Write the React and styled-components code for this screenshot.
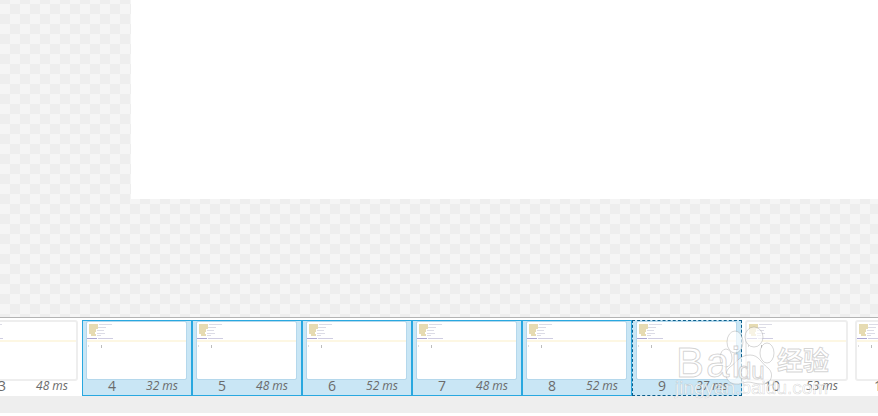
import React from "react";
import styled, { createGlobalStyle } from "styled-components";

const Global = createGlobalStyle`
  html, body {
    margin: 0;
    padding: 0;
    background: #fff;
    overflow: hidden;
  }
`;

const Page = styled.div`
  position: relative;
  width: 878px;
  height: 416px;
  overflow: hidden;
  display: flex;
  flex-direction: column;
  font-family: "Open Sans", "Liberation Sans", sans-serif;
`;

const Viewer = styled.div`
  height: 317px;
  padding-left: 131px;
  box-sizing: border-box;
  background: repeating-conic-gradient(#eeeeee 0 25%, #f5f5f5 0 50%) 0 4px / 20px 20px;
`;

const Canvas = styled.div`
  height: 199px;
  background: #fff;
`;

const Filmstrip = styled.div`
  display: flex;
  height: 79px;
  box-sizing: border-box;
  padding-top: 2px;
  margin-left: -28px;
  border-top: 1px solid #b4b4b4;
  background: #fff;
`;

const Frame = styled.div`
  flex: 0 0 110px;
  height: 76px;
  box-sizing: border-box;
  padding: 1px 4px 2px 4px;
  display: flex;
  flex-direction: column;
  background: ${(p) => (p.$selected ? "#c9e6f5" : "#fff")};
  border: 1px ${(p) => (p.$focused ? "dashed" : "solid")}
    ${(p) => (p.$focused ? "#0b5f8c" : p.$selected ? "#29a8e0" : "transparent")};
`;

const Thumb = styled.svg`
  display: block;
  width: 99px;
  height: 57px;
  flex: none;
  background: #fff;
  outline: ${(p) => (p.$selected ? "1px solid #b5d8ec" : "2px solid #eeeeee")};
  border-radius: 1px;
`;

const Meta = styled.div`
  flex: 1;
  min-height: 0;
  display: flex;
  align-items: center;
  line-height: 14px;
  color: #6b6b6b;
`;

const Index = styled.span`
  width: 50px;
  text-align: center;
  font-size: 14px;
`;

const Duration = styled.span`
  margin-left: auto;
  margin-right: 9px;
  font-size: 12px;
  font-style: italic;
`;

const Footer = styled.div`
  height: 17px;
  background: #eeeeee;
`;

const Watermark = styled.div`
  position: absolute;
  left: 674px;
  top: 326px;
  width: 170px;
  height: 80px;
  pointer-events: none;
`;

const Paw = styled.svg`
  position: absolute;
  left: 40px;
  top: 0;
  width: 70px;
  height: 64px;
`;

const Brand = styled.span`
  position: absolute;
  left: ${(p) => p.$left}px;
  top: ${(p) => p.$top}px;
  font-family: "Liberation Sans", sans-serif;
  font-size: ${(p) => p.$size}px;
  letter-spacing: ${(p) => p.$spacing || 0}px;
  line-height: 1;
  white-space: nowrap;
  color: rgba(255, 255, 255, 0.72);
  -webkit-text-stroke: 1px rgba(130, 130, 130, 0.34);
`;

const BrandCjk = styled(Brand)`
  font-family: "Noto Sans CJK SC", sans-serif;
  font-weight: 700;
`;

const Domain = styled(Brand)`
  color: rgba(255, 255, 255, 0.75);
  -webkit-text-stroke: 0.6px rgba(130, 130, 130, 0.3);
`;

const frames = [
  { n: 3, ms: 48 },
  { n: 4, ms: 32, selected: true },
  { n: 5, ms: 48, selected: true },
  { n: 6, ms: 52, selected: true },
  { n: 7, ms: 48, selected: true },
  { n: 8, ms: 52, selected: true },
  { n: 9, ms: 37, selected: true, focused: true },
  { n: 10, ms: 53 },
  { n: 11, ms: 48 },
];

// the little code page shown in every thumbnail
const ThumbArt = ({ selected }) => (
  <Thumb $selected={selected} viewBox="0 0 99 57">
    <g fill="#e6dbb2">
      <rect x="2" y="2" width="9" height="3" />
      <rect x="2" y="5" width="9" height="2" />
      <rect x="2" y="7" width="7" height="3" />
      <rect x="2" y="10" width="6" height="2" />
      <rect x="4" y="12" width="5" height="2" />
    </g>
    <g fill="#dcdce6">
      <rect x="12" y="2" width="13" height="1" />
      <rect x="11" y="5" width="8" height="1" />
      <rect x="10" y="8" width="7" height="1" />
      <rect x="10" y="11" width="8" height="1" />
      <rect x="10" y="13" width="4" height="1" />
    </g>
    <rect x="0" y="16" width="10" height="1" fill="#aaa5d4" />
    <rect x="11" y="16" width="15" height="1" fill="#cfcde2" />
    <rect x="0" y="18" width="99" height="2" fill="#fdf7e3" />
    <rect x="1" y="23" width="1" height="2" fill="#dddddd" />
    <rect x="14" y="23" width="1" height="3" fill="#bdbdbd" />
  </Thumb>
);

export default function App() {
  return (
    <Page>
      <Global />
      <Viewer>
        <Canvas />
      </Viewer>
      <Filmstrip>
        {frames.map((f) => (
          <Frame key={f.n} $selected={f.selected} $focused={f.focused}>
            <ThumbArt selected={f.selected} />
            <Meta>
              <Index>{f.n}</Index>
              <Duration>{f.ms} ms</Duration>
            </Meta>
          </Frame>
        ))}
      </Filmstrip>
      <Footer />
      <Watermark>
        <Paw viewBox="0 0 70 64">
          <g fill="rgba(255,255,255,0.66)" stroke="rgba(130,130,130,0.32)" strokeWidth="1">
            <ellipse cx="21" cy="16" rx="8" ry="11" />
            <ellipse cx="40" cy="11" rx="9" ry="10" />
            <ellipse cx="53" cy="27" rx="7" ry="10" />
            <ellipse cx="12" cy="32" rx="6" ry="9" />
            <path d="M36 29c9 0 11 8 18 13 7 6 3 17-7 16-6 0-9-2-13-2s-8 3-13 2c-9-1-12-11-5-17 7-5 10-12 20-12z" />
          </g>
        </Paw>
        <Brand $left={2} $top={16} $size={42} $spacing={2}>
          Bai
        </Brand>
        <Brand $left={64} $top={33} $size={24}>
          du
        </Brand>
        <BrandCjk $left={103} $top={20} $size={26}>
          经验
        </BrandCjk>
        <Domain $left={1} $top={52} $size={19}>
          jingyan.baidu.com
        </Domain>
      </Watermark>
    </Page>
  );
}
